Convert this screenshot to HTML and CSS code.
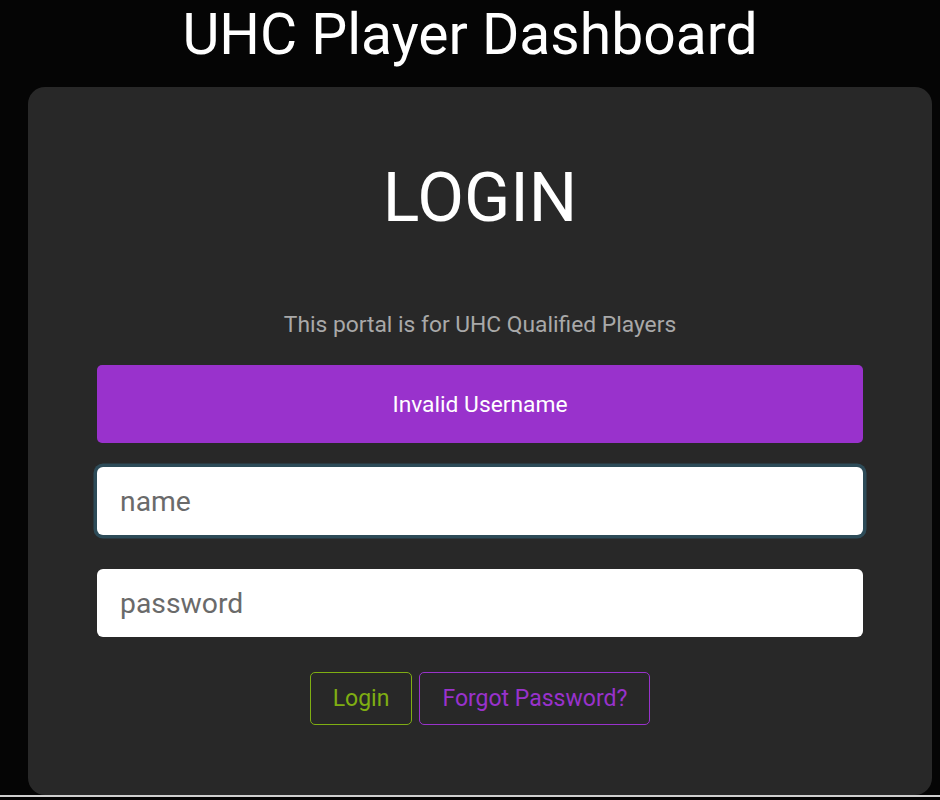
FILE: index.html
```html
<!DOCTYPE html>
<html>
<head>
<meta charset="utf-8">
<link rel="stylesheet" href="styles.css">
</head>
<body>
<h1 class="title">UHC Player Dashboard</h1>
<div class="card">
  <h2 class="login-heading">LOGIN</h2>
  <p class="subtitle">This portal is for UHC Qualified Players</p>
  <div class="alert">Invalid Username</div>
  <input class="field field-focus" type="text" placeholder="name">
  <input class="field field-pass" type="password" placeholder="password">
  <div class="actions">
    <button class="btn btn-login">Login</button>
    <button class="btn btn-forgot">Forgot Password?</button>
  </div>
</div>
<div class="bottom-line"></div>
</body>
</html>
```
FILE: styles.css
```css
html, body {
  margin: 0;
  padding: 0;
  background: #050505;
  height: 800px;
  overflow: hidden;
  font-family: Roboto, "Liberation Sans", sans-serif;
}
.title {
  margin: 0;
  padding-top: 2px;
  font-size: 57px;
  line-height: 66px;
  font-weight: 400;
  color: #ffffff;
  text-align: center;
}
.card {
  margin: 19px 8px 0 28px;
  height: 708px;
  box-sizing: border-box;
  background: #282828;
  border-radius: 17px;
  padding: 77px 69px 0 69px;
  display: flex;
  flex-direction: column;
  align-items: stretch;
}
.login-heading {
  margin: 0;
  font-size: 68px;
  line-height: 68px;
  font-weight: 400;
  color: #ffffff;
  text-align: center;
}
.subtitle {
  margin: 79px 0 0 0;
  font-size: 22.8px;
  line-height: 27px;
  color: #a9a9a9;
  text-align: center;
}
.alert {
  margin-top: 27px;
  height: 78px;
  background: #9932cc;
  border-radius: 5px;
  color: #ffffff;
  font-size: 22.8px;
  display: flex;
  align-items: center;
  justify-content: center;
}
.field {
  display: block;
  box-sizing: border-box;
  width: 100%;
  height: 68px;
  border: none;
  border-radius: 6px;
  background: #ffffff;
  padding: 0 23px;
  font-family: Roboto, "Liberation Sans", sans-serif;
  font-size: 28.3px;
  color: #333;
  outline: none;
}
.field::placeholder {
  color: #6a6a6a;
}
.field-focus {
  margin-top: 24px;
  box-shadow: 0 0 0 3.5px #2d4b58;
}
.field-pass {
  margin-top: 34px;
}
.actions {
  margin-top: 35px;
  display: flex;
  justify-content: center;
  gap: 7px;
}
.btn {
  height: 53px;
  padding: 0 22px;
  background: transparent;
  border-radius: 5px;
  font-family: Roboto, "Liberation Sans", sans-serif;
  font-size: 23px;
  cursor: pointer;
}
.btn-login {
  border: 1.5px solid #7fae12;
  color: #7fae12;
}
.btn-forgot {
  border: 1.5px solid #9932cc;
  color: #9932cc;
}
.bottom-line {
  height: 2px;
  background: #cfcfcf;
}
```
